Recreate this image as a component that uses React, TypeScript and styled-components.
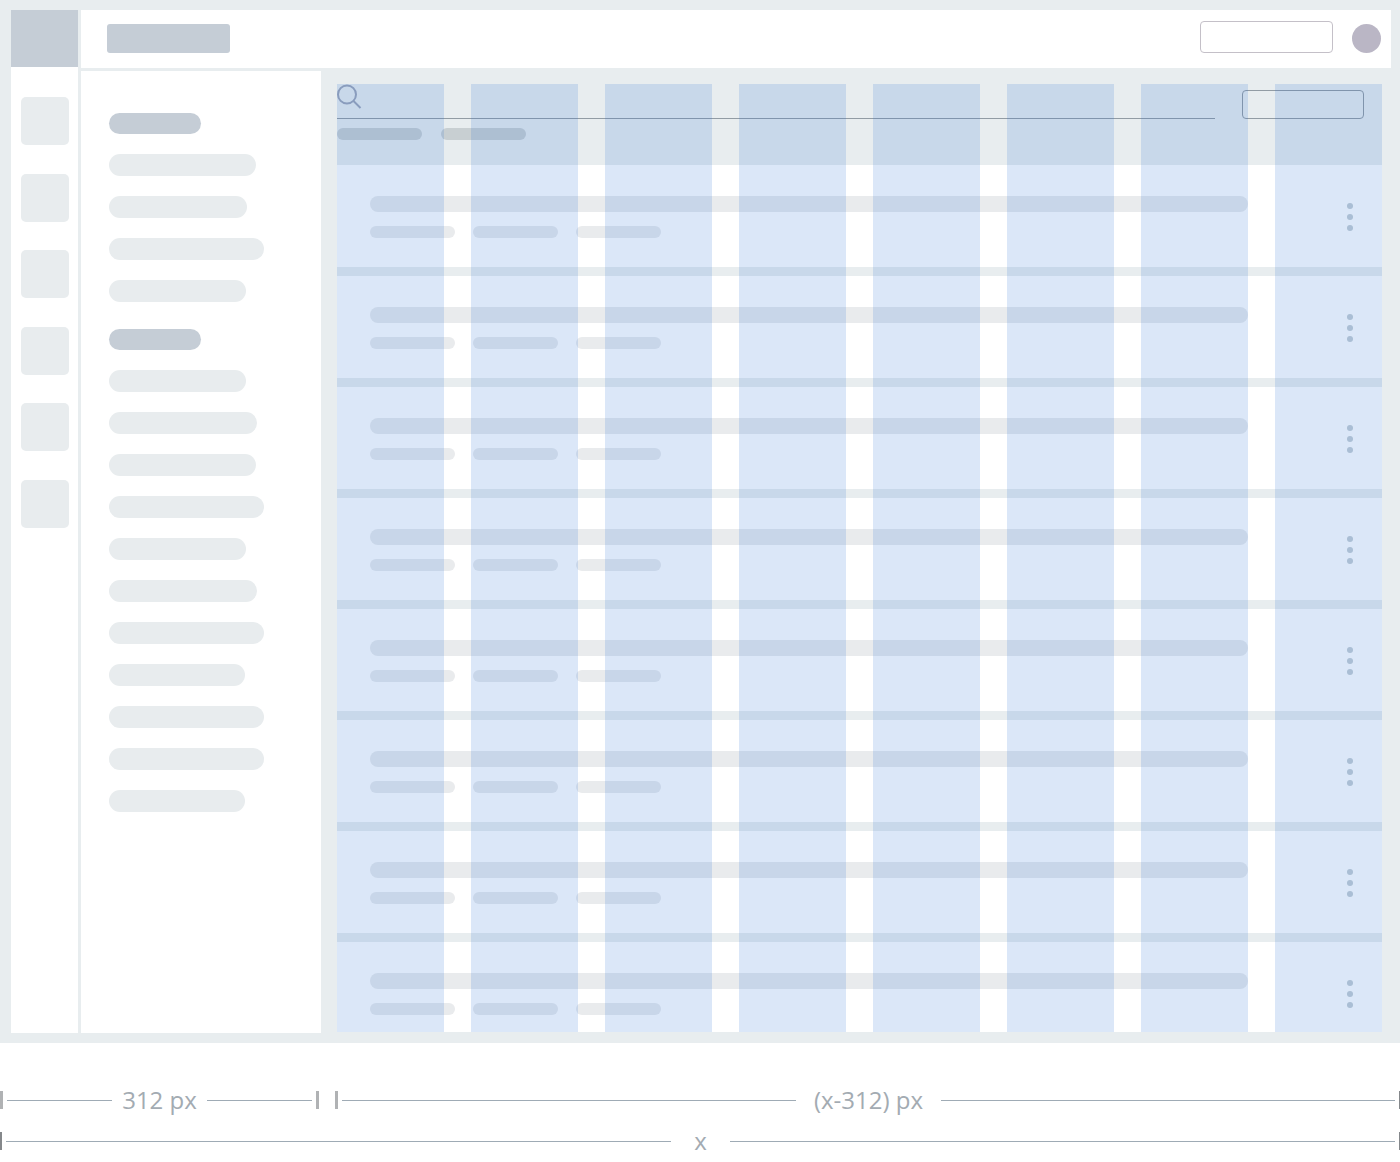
import React from "react";
import styled, { createGlobalStyle } from "styled-components";

const color = {
  canvas: "#e8edef",
  block: "#c5cdd6",
  bar: "#e8ecee",
  rowBar: "#e9ebed",
  chip: "#c8cfd2",
  outline: "#929ca4",
  measure: "#a3abb2",
  rule: "#9fabb5",
};

const GlobalStyle = createGlobalStyle`
  *, *::before, *::after { box-sizing: border-box; }
  body {
    margin: 0;
    background: #fff;
    font-family: "Open Sans", "Noto Sans", sans-serif;
  }
  button, input { font: inherit; padding: 0; margin: 0; }
  button { cursor: pointer; }
  ul { list-style: none; margin: 0; padding: 0; }
`;

const Frame = styled.div`
  display: grid;
  grid-template-columns: 67px minmax(0, 1fr);
  column-gap: 3px;
  padding: 10px 9px 10px 11px;
  background: ${color.canvas};
`;

const Rail = styled.nav`
  background: #fff;
`;

const Logo = styled.a`
  display: block;
  height: 57px;
  background: ${color.block};
`;

const RailList = styled.div`
  display: flex;
  flex-direction: column;
  align-items: center;
  justify-content: space-between;
  min-height: 431px;
  margin-top: 30px;
`;

const RailButton = styled.button`
  width: 48px;
  height: 48px;
  border: 0;
  border-radius: 5px;
  background: ${color.bar};
`;

const Workspace = styled.div`
  display: flex;
  flex-direction: column;
`;

const Header = styled.header`
  display: flex;
  align-items: flex-end;
  height: 58px;
  padding: 0 10px 15px 26px;
  background: #fff;
`;

const Title = styled.div`
  width: 123px;
  height: 29px;
  margin-right: auto;
  border-radius: 3px;
  background: ${color.block};
`;

const HeaderInput = styled.input`
  width: 133px;
  height: 32px;
  margin-right: 19px;
  border: 1px solid #c4c0c8;
  border-radius: 4px;
  background: #fff;
`;

const Avatar = styled.button`
  width: 29px;
  height: 29px;
  border: 0;
  border-radius: 50%;
  background: #bab6c5;
`;

const Body = styled.div`
  display: grid;
  grid-template-columns: 240px minmax(0, 1fr);
  flex: 1;
`;

const SidePanel = styled.aside`
  display: flex;
  flex-direction: column;
  gap: 27px;
  margin-top: 3px;
  padding: 42px 28px;
  background: #fff;
`;

const MenuGroup = styled.section`
  display: flex;
  flex-direction: column;
  gap: 20px;
`;

const MenuHeading = styled.div`
  width: 92px;
  height: 21px;
  border-radius: 11px;
  background: ${color.block};
`;

const MenuItem = styled.button<{ $width: number }>`
  width: ${(p) => p.$width}px;
  height: 22px;
  border: 0;
  border-radius: 11px;
  background: ${color.bar};
`;

const Main = styled.main`
  padding: 16px 9px 1px 16px;
`;

const Content = styled.div`
  position: relative;
`;

const ColumnOverlay = styled.div`
  position: absolute;
  inset: 0;
  display: grid;
  grid-template-columns: repeat(8, minmax(0, 1fr));
  column-gap: 27px;
  pointer-events: none;
`;

const Column = styled.div`
  background: rgba(43, 114, 214, 0.17);
`;

const Toolbar = styled.div`
  padding-bottom: 25px;
`;

const SearchRow = styled.div`
  display: flex;
  align-items: flex-end;
  gap: 27px;
  padding-right: 18px;
`;

const SearchField = styled.label`
  display: flex;
  flex: 1;
  height: 35px;
  border-bottom: 1px solid ${color.outline};
`;

const SearchInput = styled.input`
  flex: 1;
  min-width: 0;
  border: 0;
  outline: 0;
  background: transparent;
`;

const ActionButton = styled.button`
  width: 122px;
  height: 29px;
  border: 1px solid ${color.outline};
  border-radius: 4px;
  background: transparent;
`;

const ChipRow = styled.div`
  display: flex;
  gap: 19px;
  margin-top: 9px;
`;

const Chip = styled.button`
  width: 85px;
  height: 12px;
  border: 0;
  border-radius: 6px;
  background: ${color.chip};
`;

const CardList = styled.ul`
  display: flex;
  flex-direction: column;
  gap: 9px;
`;

const Card = styled.li`
  display: flex;
  gap: 99px;
  padding: 31px 29px 29px 33px;
  background: #fff;

  &:last-child {
    padding-bottom: 17px;
  }
`;

const CardText = styled.div`
  flex: 1;
`;

const CardTitle = styled.div`
  height: 16px;
  border-radius: 8px;
  background: ${color.rowBar};
`;

const CardTags = styled.div`
  display: flex;
  gap: 18px;
  margin-top: 14px;
`;

const CardTag = styled.div`
  width: 85px;
  height: 12px;
  border-radius: 6px;
  background: ${color.rowBar};
`;

const MoreButton = styled.button`
  display: flex;
  flex-direction: column;
  gap: 5px;
  height: 28px;
  margin-top: 7px;
  border: 0;
  background: transparent;
`;

const Dot = styled.span`
  width: 6px;
  height: 6px;
  border-radius: 50%;
  background: #c4ced5;
`;

const Measurements = styled.footer`
  display: flex;
  flex-direction: column;
  gap: 9px;
  padding: 41px 0 5px;
`;

const MeasureRow = styled.div<{ $split?: boolean }>`
  display: grid;
  grid-template-columns: ${(p) => (p.$split ? "319px minmax(0, 1fr)" : "minmax(0, 1fr)")};
  column-gap: 16px;
`;

const Measure = styled.div`
  display: flex;
  align-items: center;
  gap: 4px;
  height: 32px;
`;

const Tick = styled.span<{ $width: number; $dark?: boolean }>`
  width: ${(p) => p.$width}px;
  height: 18px;
  background: ${(p) => (p.$dark ? "#85888b" : "#b0b2b4")};
`;

const Span = styled.div`
  display: flex;
  flex: 1;
  align-items: center;
`;

const Rule = styled.span`
  flex: 1;
  height: 1px;
  background: ${color.rule};
`;

const MeasureLabel = styled.span<{ $pad: number }>`
  padding: 0 ${(p) => p.$pad}px;
  color: ${color.measure};
  font-size: 24px;
  line-height: 32px;
  white-space: nowrap;
`;

const SearchIcon = () => (
  <svg width="25" height="25" viewBox="0 0 25 25" fill="none" stroke="#9da5b8" strokeWidth="2" aria-hidden="true">
    <circle cx="10" cy="10.5" r="9" />
    <path d="M16.5 17 23.5 24" />
  </svg>
);

type DimensionProps = {
  label: string;
  pad: number;
  start: number;
  end: number;
  darkStart?: boolean;
  darkEnd?: boolean;
};

const Dimension = ({ label, pad, start, end, darkStart, darkEnd }: DimensionProps) => (
  <Measure>
    <Tick $width={start} $dark={darkStart} />
    <Span>
      <Rule />
      <MeasureLabel $pad={pad}>{label}</MeasureLabel>
      <Rule />
    </Span>
    <Tick $width={end} $dark={darkEnd} />
  </Measure>
);

const menuGroups = [
  [147, 138, 155, 137],
  [137, 148, 147, 155, 137, 148, 155, 136, 155, 155, 136],
];

const range = (count: number) => Array.from({ length: count }, (_, i) => i);

export default function App() {
  return (
    <>
      <GlobalStyle />
      <Frame>
        <Rail aria-label="Primary">
          <Logo href="#" aria-label="Home" />
          <RailList>
            {range(6).map((i) => (
              <RailButton key={i} type="button" aria-label={`Section ${i + 1}`} />
            ))}
          </RailList>
        </Rail>
        <Workspace>
          <Header>
            <Title />
            <HeaderInput type="text" aria-label="Quick find" />
            <Avatar type="button" aria-label="Account" />
          </Header>
          <Body>
            <SidePanel>
              {menuGroups.map((widths, g) => (
                <MenuGroup key={g}>
                  <MenuHeading />
                  {widths.map((width, i) => (
                    <MenuItem key={i} type="button" $width={width} aria-label={`Menu item ${i + 1}`} />
                  ))}
                </MenuGroup>
              ))}
            </SidePanel>
            <Main>
              <Content>
                <Toolbar>
                  <SearchRow>
                    <SearchField>
                      <SearchIcon />
                      <SearchInput type="search" aria-label="Search" />
                    </SearchField>
                    <ActionButton type="button" aria-label="Action" />
                  </SearchRow>
                  <ChipRow>
                    <Chip type="button" aria-label="Filter 1" />
                    <Chip type="button" aria-label="Filter 2" />
                  </ChipRow>
                </Toolbar>
                <CardList>
                  {range(8).map((i) => (
                    <Card key={i}>
                      <CardText>
                        <CardTitle />
                        <CardTags>
                          <CardTag />
                          <CardTag />
                          <CardTag />
                        </CardTags>
                      </CardText>
                      <MoreButton type="button" aria-label="More options">
                        <Dot />
                        <Dot />
                        <Dot />
                      </MoreButton>
                    </Card>
                  ))}
                </CardList>
                <ColumnOverlay>
                  {range(8).map((i) => (
                    <Column key={i} />
                  ))}
                </ColumnOverlay>
              </Content>
            </Main>
          </Body>
        </Workspace>
      </Frame>
      <Measurements>
        <MeasureRow $split>
          <Dimension label="312 px" pad={10} start={3} end={3} />
          <Dimension label="(x-312) px" pad={18} start={3} end={1} darkEnd />
        </MeasureRow>
        <MeasureRow>
          <Dimension label="x" pad={23} start={2} end={1} darkStart darkEnd />
        </MeasureRow>
      </Measurements>
    </>
  );
}
